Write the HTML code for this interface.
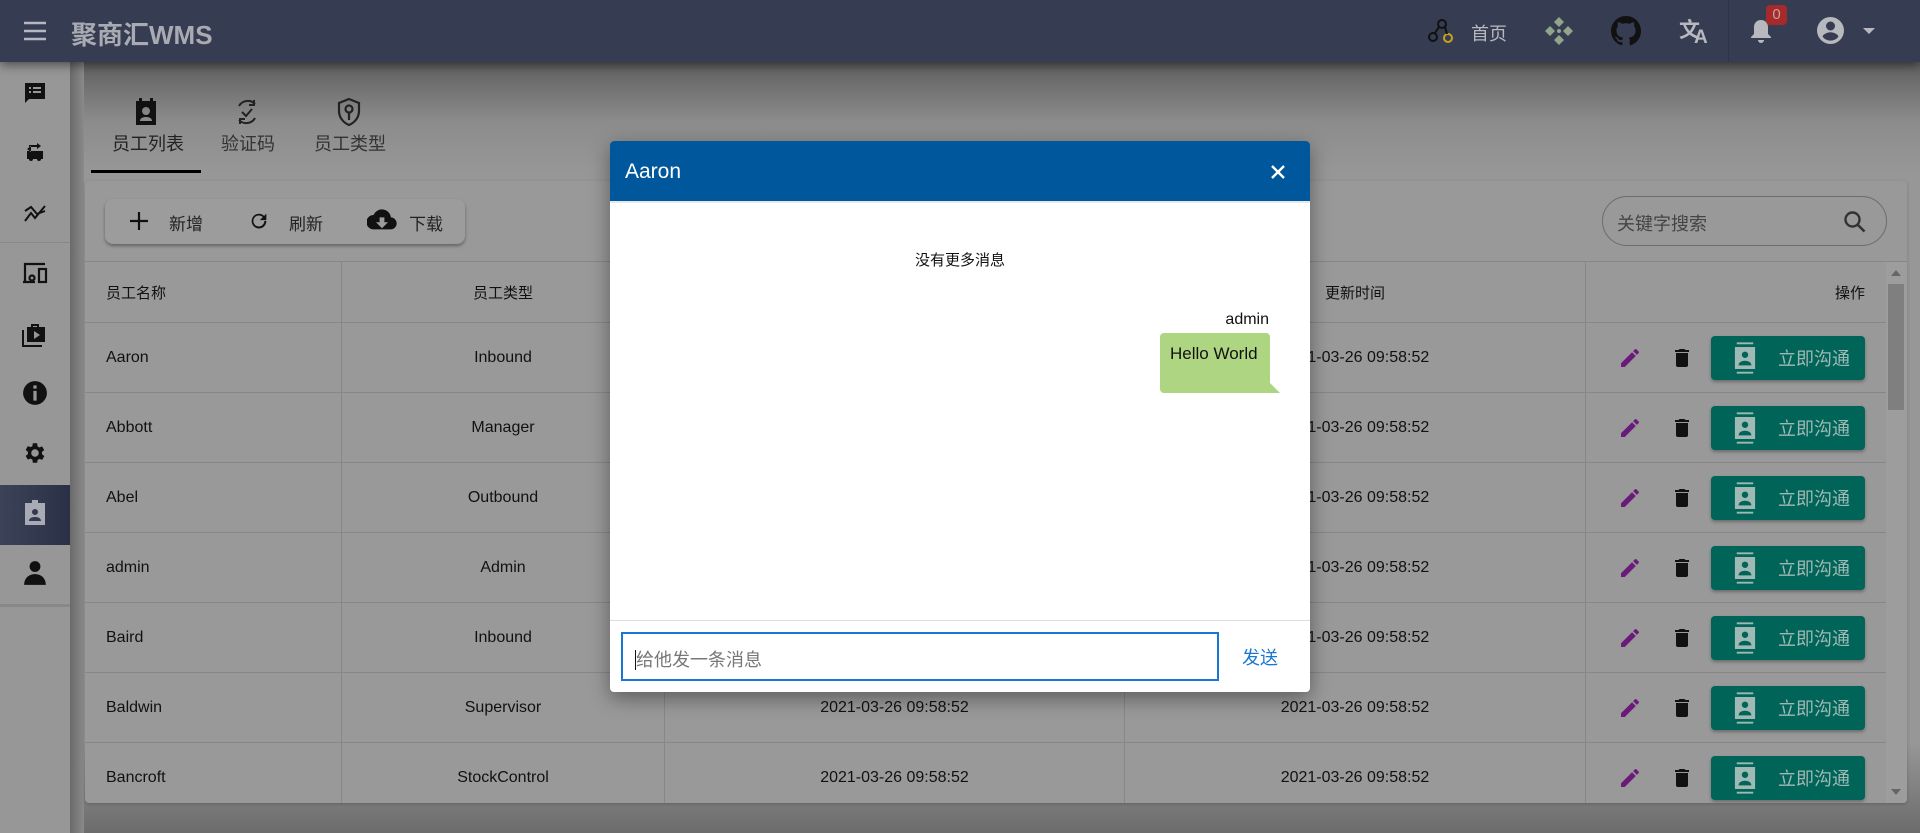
<!DOCTYPE html>
<html><head><meta charset="utf-8"><style>
*{box-sizing:border-box;margin:0;padding:0}
body{width:1920px;height:833px;overflow:hidden;font-family:"Liberation Sans","Noto Sans CJK SC",sans-serif;background:#8f8f8f;position:relative;color:#111}
.hdr{position:absolute;left:0;top:0;width:1920px;height:62px;background:#363c51;box-shadow:0 3px 10px rgba(0,0,0,.5);z-index:5}
.main{position:absolute;left:84px;top:62px;right:0;bottom:0;background:linear-gradient(#5f5f5f 0px,#8c8c8c 60px,#979797 110px,#979797 680px,#6c6c6c 771px)}
.side{position:absolute;left:0;top:62px;width:70px;bottom:0;background:#979797}
.strip{position:absolute;left:70px;top:62px;width:14px;bottom:0;background:linear-gradient(90deg,#6a6a6a,#8a8a8a)}
.si{position:absolute;left:0;width:70px;height:60px;display:flex;align-items:center;justify-content:center}
.card{position:absolute;left:85px;top:181px;width:1822px;height:622px;background:#999;border-radius:4px;overflow:hidden;box-shadow:0 1px 3px rgba(0,0,0,.2)}
.row{position:absolute;left:0;width:1801px;border-bottom:1px solid #878787;font-size:16px}
.c{position:absolute;top:0;height:100%;display:flex;align-items:center;border-right:1px solid #878787}
.btn{position:absolute;left:1626px;width:154px;height:44px;background:#006459;border-radius:4px;box-shadow:0 2px 3px rgba(0,0,0,.3);color:#9fb9b4;font-size:19px;display:flex;align-items:center}
</style></head><body>
<div class="hdr">
 <svg style="position:absolute;left:23px;top:20px" width="24" height="22" viewBox="0 0 24 22"><path d="M1 3h22M1 11h22M1 19h22" stroke="#b5b8c2" stroke-width="2.6"/></svg>
 <div style="position:absolute;left:71px;top:15px;font-size:26px;font-weight:bold;color:#a9abb3">聚商汇WMS</div>
 <svg style="position:absolute;left:1428px;top:18px" width="26" height="26" viewBox="0 0 26 26"><circle cx="14" cy="6" r="4" fill="none" stroke="#111" stroke-width="2"/><circle cx="5" cy="19" r="4" fill="none" stroke="#111" stroke-width="2"/><circle cx="20" cy="20" r="4" fill="none" stroke="#c9a21b" stroke-width="2"/><path d="M11 9L7 15M17 9l2 7" stroke="#111" stroke-width="2"/></svg>
 <div style="position:absolute;left:1471px;top:20px;font-size:18px;color:#b8b9bf">首页</div>
 <svg style="position:absolute;left:1545px;top:17px" width="28" height="28" viewBox="0 0 28 28" fill="#8fa68b"><path d="M14 0l5 5-5 5-5-5zM14 18l5 5-5 5-5-5zM0 14l5-5 5 5-5 5zM18 14l5-5 5 5-5 5z"/><circle cx="14" cy="14" r="2"/></svg>
 <svg style="position:absolute;left:1611px;top:16px" width="30" height="30" viewBox="0 0 16 16"><path fill="#111" d="M8 0C3.58 0 0 3.58 0 8c0 3.540 2.29 6.53 5.47 7.59.4.07.55-.17.55-.38v-1.33c-2.23.48-2.7-1.070-2.7-1.07-.36-.92-.89-1.170-.89-1.17-.73-.5.05-.49.05-.49.8.06 1.23.83 1.23.83.72 1.22 1.87.87 2.33.66.07-.52.28-.87.5-1.07-1.78-.2-3.64-.89-3.64-3.95 0-.87.31-1.59.82-2.15-.08-.2-.36-1.02.08-2.12 0 0 .67-.21 2.2.82a7.6 7.6 0 014 0c1.53-1.04 2.2-.82 2.2-.82.44 1.1.16 1.92.08 2.12.51.56.82 1.27.82 2.15 0 3.07-1.87 3.75-3.65 3.95.29.25.54.73.54 1.48v2.2c0 .21.15.46.55.38A8.01 8.01 0 0016 8c0-4.42-3.58-8-8-8z"/></svg>
 <div style="position:absolute;left:1679px;top:14px;font-size:21px;font-weight:bold;color:#b8b9bf">文<span style="font-size:19px;margin-left:-6px;position:relative;top:6px">A</span></div>
 <div style="position:absolute;left:1728px;top:0;width:1px;height:62px;background:#2f3447"></div>
 <svg style="position:absolute;left:1750px;top:18px" width="22" height="26" viewBox="0 0 22 26" fill="#b8b9bf"><path d="M11 2c-4 0-7 3-7 7v7l-3 3v1h20v-1l-3-3V9c0-4-3-7-7-7zM8 22h6a3 3 0 01-6 0z"/></svg>
 <div style="position:absolute;left:1766px;top:5px;width:21px;height:20px;background:#a62a2a;border-radius:4px;color:#c9a0a0;font-size:15px;text-align:center;line-height:20px">0</div>
 <svg style="position:absolute;left:1817px;top:17px" width="27" height="27" viewBox="0 0 24 24" fill="#b8b9bf"><path d="M12 0a12 12 0 100 24 12 12 0 000-24zm0 4a4 4 0 110 8 4 4 0 010-8zm0 17a9 9 0 01-7-3.5c0-2.5 5-4 7-4s7 1.5 7 4A9 9 0 0112 21z"/></svg>
 <div style="position:absolute;left:1863px;top:28px;border-left:6px solid transparent;border-right:6px solid transparent;border-top:6px solid #b8b9bf"></div>
</div>
<div class="main"></div>
<div class="side">
 <div style="position:absolute;top:180px;left:0;width:70px;height:1px;background:#888"></div>
 <div style="position:absolute;top:542px;left:0;width:70px;height:3px;background:#888"></div>
 <div class="si" style="top:423px;background:linear-gradient(90deg,#3c4258,#2a3046)"></div>
</div>
<div class="strip"></div>
<svg style="position:absolute;left:23px;top:81px" width="24" height="24" viewBox="0 0 24 24" fill="#111"><path d="M2 2h20v16H6l-4 4zM6 6v2h2V6zm4 0v2h8V6zM6 10v2h2v-2zm4 0v2h8v-2z"/></svg>
<svg style="position:absolute;left:23px;top:141px" width="24" height="24" viewBox="0 0 24 24" fill="#111"><path d="M14 2l4 3-4 3V6H6V4h8zM4 10h16v8h-2a2 2 0 01-4 0h-4a2 2 0 01-4 0H4zm4-3V5l-4 3 4 3z"/></svg>
<svg style="position:absolute;left:23px;top:201px" width="24" height="24" viewBox="0 0 24 24" fill="none" stroke="#111" stroke-width="2"><path d="M2 20l6-8 4 5 10-12M2 10l6-4 6 7 8-3"/></svg>
<svg style="position:absolute;left:21px;top:261px" width="28" height="24" viewBox="0 0 28 24" fill="none" stroke="#111" stroke-width="2.2"><path d="M4 20V3h20M2 21h12"/><rect x="18" y="8" width="7" height="13"/><circle cx="11" cy="17" r="2.5"/></svg>
<svg style="position:absolute;left:21px;top:320px" width="28" height="28" viewBox="0 0 28 28" fill="#111"><path d="M10 4h8v3h6v15H6V7h4zM12 6v1h4V6zM13 11v8l6-4z"/><path d="M3 10v15h18v2H1V10z"/></svg>
<svg style="position:absolute;left:22px;top:380px" width="26" height="26" viewBox="0 0 24 24" fill="#111"><path d="M12 1a11 11 0 100 22 11 11 0 000-22zm-1.5 4h3v3h-3zm0 5h3v9h-3z"/></svg>
<svg style="position:absolute;left:22px;top:440px" width="26" height="26" viewBox="0 0 24 24" fill="#111"><path d="M19.4 13a7.5 7.5 0 000-2l2.1-1.6-2-3.5-2.5 1a7 7 0 00-1.7-1L15 3h-4l-.4 2.6a7 7 0 00-1.7 1l-2.5-1-2 3.5L6.5 11a7.5 7.5 0 000 2l-2.1 1.6 2 3.5 2.5-1a7 7 0 001.7 1L11 21h4l.4-2.6a7 7 0 001.7-1l2.5 1 2-3.5zM13 15.5a3.5 3.5 0 110-7 3.5 3.5 0 010 7z" transform="translate(-1 0)"/></svg>
<svg style="position:absolute;left:23px;top:500px" width="24" height="26" viewBox="0 0 24 26" fill="#a8abb6"><path d="M9 0h6v3h-6zM2 3h20v22H2zM12 9a3 3 0 100 6 3 3 0 000-6zm-6 12h12c0-3-3-4-6-4s-6 1-6 4z"/></svg>
<svg style="position:absolute;left:22px;top:560px" width="26" height="26" viewBox="0 0 24 24" fill="#111"><circle cx="12" cy="6" r="5"/><path d="M2 23c0-6 4-10 10-10s10 4 10 10zM8 21l4-5 4 5" /></svg>
<svg style="position:absolute;left:134px;top:98px" width="24" height="28" viewBox="0 0 24 28" fill="#111"><path d="M5 0h3v3h8V0h3v3h3v24H2V3h3zM12 9a4 4 0 100 8 4 4 0 000-8zM6 23h12c0-3-3-4-6-4s-6 1-6 4z"/></svg>
<svg style="position:absolute;left:234px;top:98px" width="26" height="28" viewBox="0 0 26 28" fill="none" stroke="#222" stroke-width="2"><path d="M5 8a10 10 0 0116-2M21 20A10 10 0 015 22M20 2v5h-5M6 26v-5h5M8 14l4 4 6-7"/></svg>
<svg style="position:absolute;left:336px;top:97px" width="26" height="30" viewBox="0 0 26 30" fill="none" stroke="#222" stroke-width="2.2"><path d="M13 2L3 6v8c0 7 5 12 10 14 5-2 10-7 10-14V6z"/><circle cx="13" cy="12" r="3.5"/><path d="M13 16v7"/></svg>
<div style="position:absolute;left:112px;top:130px;font-size:18px;color:#222">员工列表</div>
<div style="position:absolute;left:221px;top:130px;font-size:18px;color:#333">验证码</div>
<div style="position:absolute;left:314px;top:130px;font-size:18px;color:#333">员工类型</div>
<div style="position:absolute;left:91px;top:170px;width:110px;height:3px;background:#000"></div>
<div class="card">
 <div style="position:absolute;left:20px;top:18px;width:360px;height:45px;background:#9c9c9c;border-radius:8px;box-shadow:0 2px 3px rgba(0,0,0,.35);font-size:17px;color:#222">
  <svg style="position:absolute;left:24px;top:12px" width="20" height="20"><path d="M10 1v18M1 10h18" stroke="#111" stroke-width="2.2"/></svg>
  <span style="position:absolute;left:64px;top:11px">新增</span>
  <svg style="position:absolute;left:143px;top:11px" width="22" height="22" viewBox="0 0 24 24"><path d="M17.6 6.4A8 8 0 1020 12h-2.2a6 6 0 11-1.7-4.2L13 11h7V4z" fill="#111"/></svg>
  <span style="position:absolute;left:184px;top:11px">刷新</span>
  <svg style="position:absolute;left:262px;top:10px" width="30" height="24" viewBox="0 0 24 20"><path d="M19.4 7A7.5 7.5 0 005 5 6 6 0 005 17h14a5 5 0 00.4-10zM17 11l-5 5-5-5h3V7h4v4z" fill="#111"/></svg>
  <span style="position:absolute;left:304px;top:11px">下载</span>
 </div>
 <div style="position:absolute;left:1517px;top:15px;width:285px;height:50px;border:1px solid #6c6c6c;border-radius:25px;font-size:18px;color:#444">
  <span style="position:absolute;left:14px;top:13px">关键字搜索</span>
  <svg style="position:absolute;left:240px;top:13px" width="24" height="24" viewBox="0 0 24 24"><circle cx="9.5" cy="9.5" r="7" fill="none" stroke="#333" stroke-width="2.4"/><path d="M14.5 14.5l7 7" stroke="#333" stroke-width="2.6"/></svg>
 </div>
 <div style="position:absolute;left:0;top:80px;width:1822px;height:1px;background:#878787"></div>
 <div style="position:absolute;left:1801px;top:81px;width:21px;height:541px;background:#9d9d9d">
  <div style="position:absolute;left:5px;top:8px;border-left:5px solid transparent;border-right:5px solid transparent;border-bottom:6px solid #666"></div>
  <div style="position:absolute;left:2px;top:22px;width:16px;height:126px;background:#7f7f7f"></div>
  <div style="position:absolute;left:5px;bottom:8px;border-left:5px solid transparent;border-right:5px solid transparent;border-top:6px solid #666"></div>
 </div>
 <div id="rows"></div>
</div>
<div style="position:absolute;left:610px;top:141px;width:700px;height:551px;background:#fff;border-radius:4px;overflow:hidden;box-shadow:0 6px 20px rgba(0,0,0,.4)">
 <div style="height:62px;background:#01579b;border-bottom:2px solid #e8e8e8;color:#fff;font-size:21px;padding:19px 0 0 15px">Aaron
  <svg style="position:absolute;left:660px;top:23px" width="16" height="16"><path d="M2 2l12 12M14 2L2 14" stroke="#fff" stroke-width="2.4"/></svg></div>
 <div style="position:absolute;left:0;width:700px;top:108px;text-align:center;font-size:15px">没有更多消息</div>
 <div style="position:absolute;right:41px;top:170px;font-size:16px">admin</div>
 <div style="position:absolute;left:550px;top:192px;width:110px;height:60px;background:#aed581;border-radius:4px 4px 0 4px;font-size:17px;padding:11px 0 0 10px">Hello World</div>
 <div style="position:absolute;left:660px;top:242px;width:0;height:0;border-left:10px solid #aed581;border-top:10px solid transparent"></div>
 <div style="position:absolute;left:0;top:479px;width:700px;height:1px;background:#ddd"></div>
 <div style="position:absolute;left:11px;top:491px;width:598px;height:49px;border:2px solid #1976d2;font-size:18px;color:#777;padding:12px 0 0 12px"><span style="border-left:1px solid #111"></span>给他发一条消息</div>
 <div style="position:absolute;left:632px;top:503px;font-size:18px;color:#1976d2">发送</div>
</div>
<script>
var d=[["Aaron","Inbound"],["Abbott","Manager"],["Abel","Outbound"],["admin","Admin"],["Baird","Inbound"],["Baldwin","Supervisor"],["Bancroft","StockControl"]];
var h='<div class="row" style="top:81px;height:61px;font-size:15px"><div class="c" style="left:0;width:257px;padding-left:21px">员工名称</div><div class="c" style="left:257px;width:323px;justify-content:center">员工类型</div><div class="c" style="left:580px;width:460px"></div><div class="c" style="left:1040px;width:461px;justify-content:center">更新时间</div><div class="c" style="left:1501px;width:300px;border:0;justify-content:flex-end;padding-right:21px">操作</div></div>';
var ic='<svg width="24" height="24" viewBox="0 0 24 24" style="position:absolute;left:1533px;top:23px"><path d="M3 17.25V21h3.75L17.8 9.94l-3.75-3.75zM20.7 7.04a1 1 0 000-1.41l-2.34-2.34a1 1 0 00-1.41 0l-1.83 1.83 3.75 3.75z" fill="#6a1b7a"/></svg><svg width="24" height="24" viewBox="0 0 24 24" style="position:absolute;left:1585px;top:23px"><path d="M6 19a2 2 0 002 2h8a2 2 0 002-2V7H6zM19 4h-3.5l-1-1h-5l-1 1H5v2h14z" fill="#111"/></svg>';
for(var i=0;i<7;i++){var t=142+i*70;
h+='<div class="row" style="top:'+t+'px;height:70px"><div class="c" style="left:0;width:257px;padding-left:21px">'+d[i][0]+'</div><div class="c" style="left:257px;width:323px;justify-content:center">'+d[i][1]+'</div><div class="c" style="left:580px;width:460px;justify-content:center">2021-03-26 09:58:52</div><div class="c" style="left:1040px;width:461px;justify-content:center">2021-03-26 09:58:52</div>'+ic+'<div class="btn" style="top:13px"><svg style="margin-left:23px" width="22" height="32" viewBox="0 0 24 34" fill="#9fb9b4"><path d="M3 0h18v2H3zM3 32h18v2H3zM1 5h22v24H1zM12 10a3.5 3.5 0 100 7 3.5 3.5 0 000-7zM5 25h14c0-3-3-5-7-5s-7 2-7 5z"/></svg><span style="margin-left:22px;font-size:18px">立即沟通</span></div></div>';}
document.getElementById('rows').innerHTML=h;
</script>
</body></html>
